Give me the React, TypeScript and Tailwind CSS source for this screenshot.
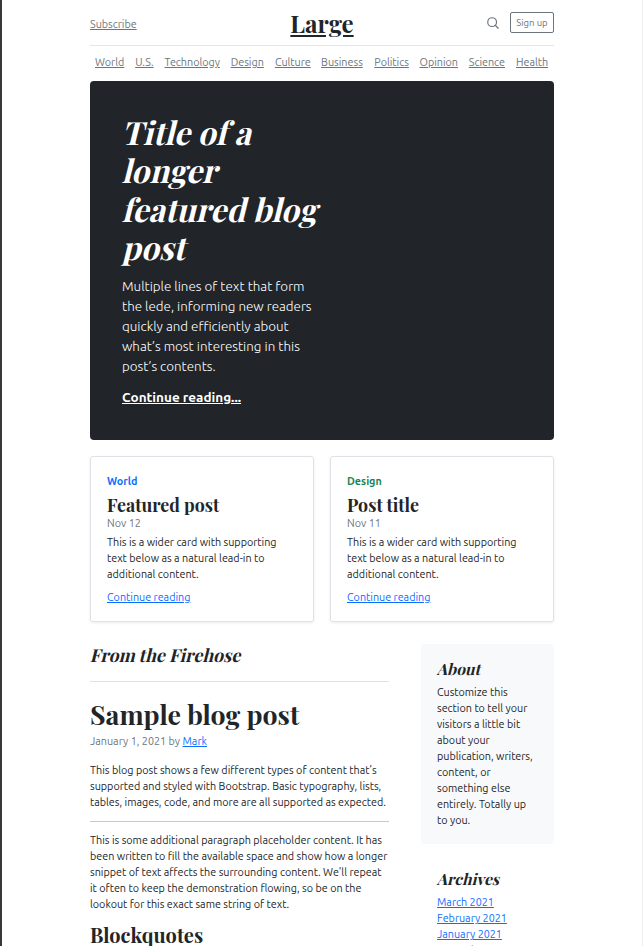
import React from "react";

const navLinks: { label: string; cls: string }[] = [
  { label: "World", cls: "w-[30px]" },
  { label: "U.S.", cls: "w-[19px]" },
  { label: "Technology", cls: "w-[56px]" },
  { label: "Design", cls: "w-[34px]" },
  { label: "Culture", cls: "w-[36px]" },
  { label: "Business", cls: "w-[43px]" },
  { label: "Politics", cls: "w-[35px]" },
  { label: "Opinion", cls: "w-[39px]" },
  { label: "Science", cls: "w-[37px]" },
  { label: "Health", cls: "w-[33px]" },
];

const serif = "font-['Playfair_Display','Liberation_Serif',serif] font-bold";

// Slants the upright face around its baseline instead of using the cursive italic.
const slanted = "block w-fit origin-[0_78%] -skew-x-[14deg] whitespace-nowrap";

function Lines({ lines }: { lines: string[] }) {
  return (
    <>
      {lines.map((line) => (
        <span key={line} className="block whitespace-nowrap">
          {line}
        </span>
      ))}
    </>
  );
}

function PostCard(props: { category: string; color: string; title: string; date: string }) {
  return (
    <article className="h-[166px] w-56 rounded-[3px] border border-[#dee2e6] px-4 pt-4 shadow-[0_1px_3px_rgba(0,0,0,0.08)]">
      <strong className={`block font-bold ${props.color}`}>{props.category}</strong>
      <h3 className={`${serif} mt-[5px] text-[17.8px] leading-[21px] whitespace-nowrap`}>{props.title}</h3>
      <div className="text-[#6c757d]">{props.date}</div>
      <p className="mt-[3px]">
        <Lines lines={["This is a wider card with supporting", "text below as a natural lead-in to", "additional content."]} />
      </p>
      <a className="mt-[7px] inline-block text-[#0d6efd] underline">Continue reading</a>
    </article>
  );
}

export default function App() {
  return (
    <div className="flex h-[946px] w-[643px] overflow-hidden border-r border-l-2 border-r-[#eeeeee] border-l-[#38363a] bg-white pl-[88px] font-[Ubuntu,'Noto_Sans',sans-serif] text-[10.78px] leading-4 text-[#212529]">
      <div className="w-[464px]">
        <header className="flex h-[46px] items-center justify-between border-b border-[#e5e5e5]">
          <div className="w-[155px] pt-[3px] text-[#6c757d]">
            <a className="underline">Subscribe</a>
          </div>
          <a className={`${serif} text-[24px] leading-8 underline`}>Large</a>
          <div className="flex w-[155px] items-center justify-end gap-[10px] text-[#6c757d]">
            <svg className="size-[14px]" viewBox="0 0 24 24" fill="none" stroke="currentColor" strokeWidth="2" strokeLinecap="round" strokeLinejoin="round">
              <circle cx="10.5" cy="10.5" r="7.5" />
              <path d="M21 21l-5.2-5.2" />
            </svg>
            <a className="flex h-[21px] w-11 items-center justify-center rounded-[2px] border border-[#6c757d] text-[9.5px]">Sign up</a>
          </div>
        </header>
        <nav className="flex h-[35px] justify-between px-[5px] pt-2 text-[#6c757d]">
          {navLinks.map((item) => (
            <a key={item.label} className={`${item.cls} whitespace-nowrap underline`}>
              {item.label}
            </a>
          ))}
        </nav>
        <section className="h-[359px] rounded-[4px] bg-[#212529] p-8 text-white">
          <h1 className={`${serif} text-[32px] leading-[38.4px]`}>
            {["Title of a", "longer", "featured blog", "post"].map((line) => (
              <span key={line} className={slanted}>
                {line}
              </span>
            ))}
          </h1>
          <p className="mt-[10px] text-[13.4px] leading-5 font-light">
            <Lines
              lines={["Multiple lines of text that form", "the lede, informing new readers", "quickly and efficiently about", "what’s most interesting in this", "post’s contents."]}
            />
          </p>
          <a className="mt-[10px] inline-block text-[13.5px] leading-5 font-bold underline">Continue reading...</a>
        </section>
        <section className="mt-4 flex justify-between">
          <PostCard category="World" color="text-[#0d6efd]" title="Featured post" date="Nov 12" />
          <PostCard category="Design" color="text-[#198754]" title="Post title" date="Nov 11" />
        </section>
        <div className="mt-[22px] flex gap-8">
          <main className="w-[299px]">
            <h3 className={`${serif} h-[38px] border-b border-[#dee2e6] text-[17.85px] leading-[22px]`}>
              <span className={slanted}>From the Firehose</span>
            </h3>
            <h2 className={`${serif} mt-[15px] text-[26.67px] leading-[34px] whitespace-nowrap`}>Sample blog post</h2>
            <p className="mt-[2px] text-[#6c757d]">
              January 1, 2021 by <a className="text-[#0d6efd] underline">Mark</a>
            </p>
            <p className="mt-[13px]">
              <Lines
                lines={["This blog post shows a few different types of content that’s", "supported and styled with Bootstrap. Basic typography, lists,", "tables, images, code, and more are all supported as expected."]}
              />
            </p>
            <hr className="mt-[11px] border-[#c7c8c9]" />
            <p className="mt-[10px]">
              <Lines
                lines={["This is some additional paragraph placeholder content. It has", "been written to fill the available space and show how a longer", "snippet of text affects the surrounding content. We'll repeat", "it often to keep the demonstration flowing, so be on the", "lookout for this exact same string of text."]}
              />
            </p>
            <h2 className={`${serif} mt-[10px] text-[20px] leading-[26px]`}>Blockquotes</h2>
          </main>
          <aside className="w-[133px]">
            <section className="h-[200px] rounded-[4px] bg-[#f8f9fa] px-4 pt-[15px]">
              <h4 className={`${serif} text-[15.6px] leading-[19px]`}>
                <span className={slanted}>About</span>
              </h4>
              <p className="mt-[6px]">
                <Lines lines={["Customize this", "section to tell your", "visitors a little bit", "about your", "publication, writers,", "content, or", "something else", "entirely. Totally up", "to you."]} />
              </p>
            </section>
            <section className="px-4 pt-[25px]">
              <h4 className={`${serif} text-[15.6px] leading-[19px]`}>
                <span className={slanted}>Archives</span>
              </h4>
              <ol className="mt-[6px] text-[#0d6efd]">
                {["March 2021", "February 2021", "January 2021", "December 2020"].map((month) => (
                  <li key={month}>
                    <a className="underline">{month}</a>
                  </li>
                ))}
              </ol>
            </section>
          </aside>
        </div>
      </div>
    </div>
  );
}
